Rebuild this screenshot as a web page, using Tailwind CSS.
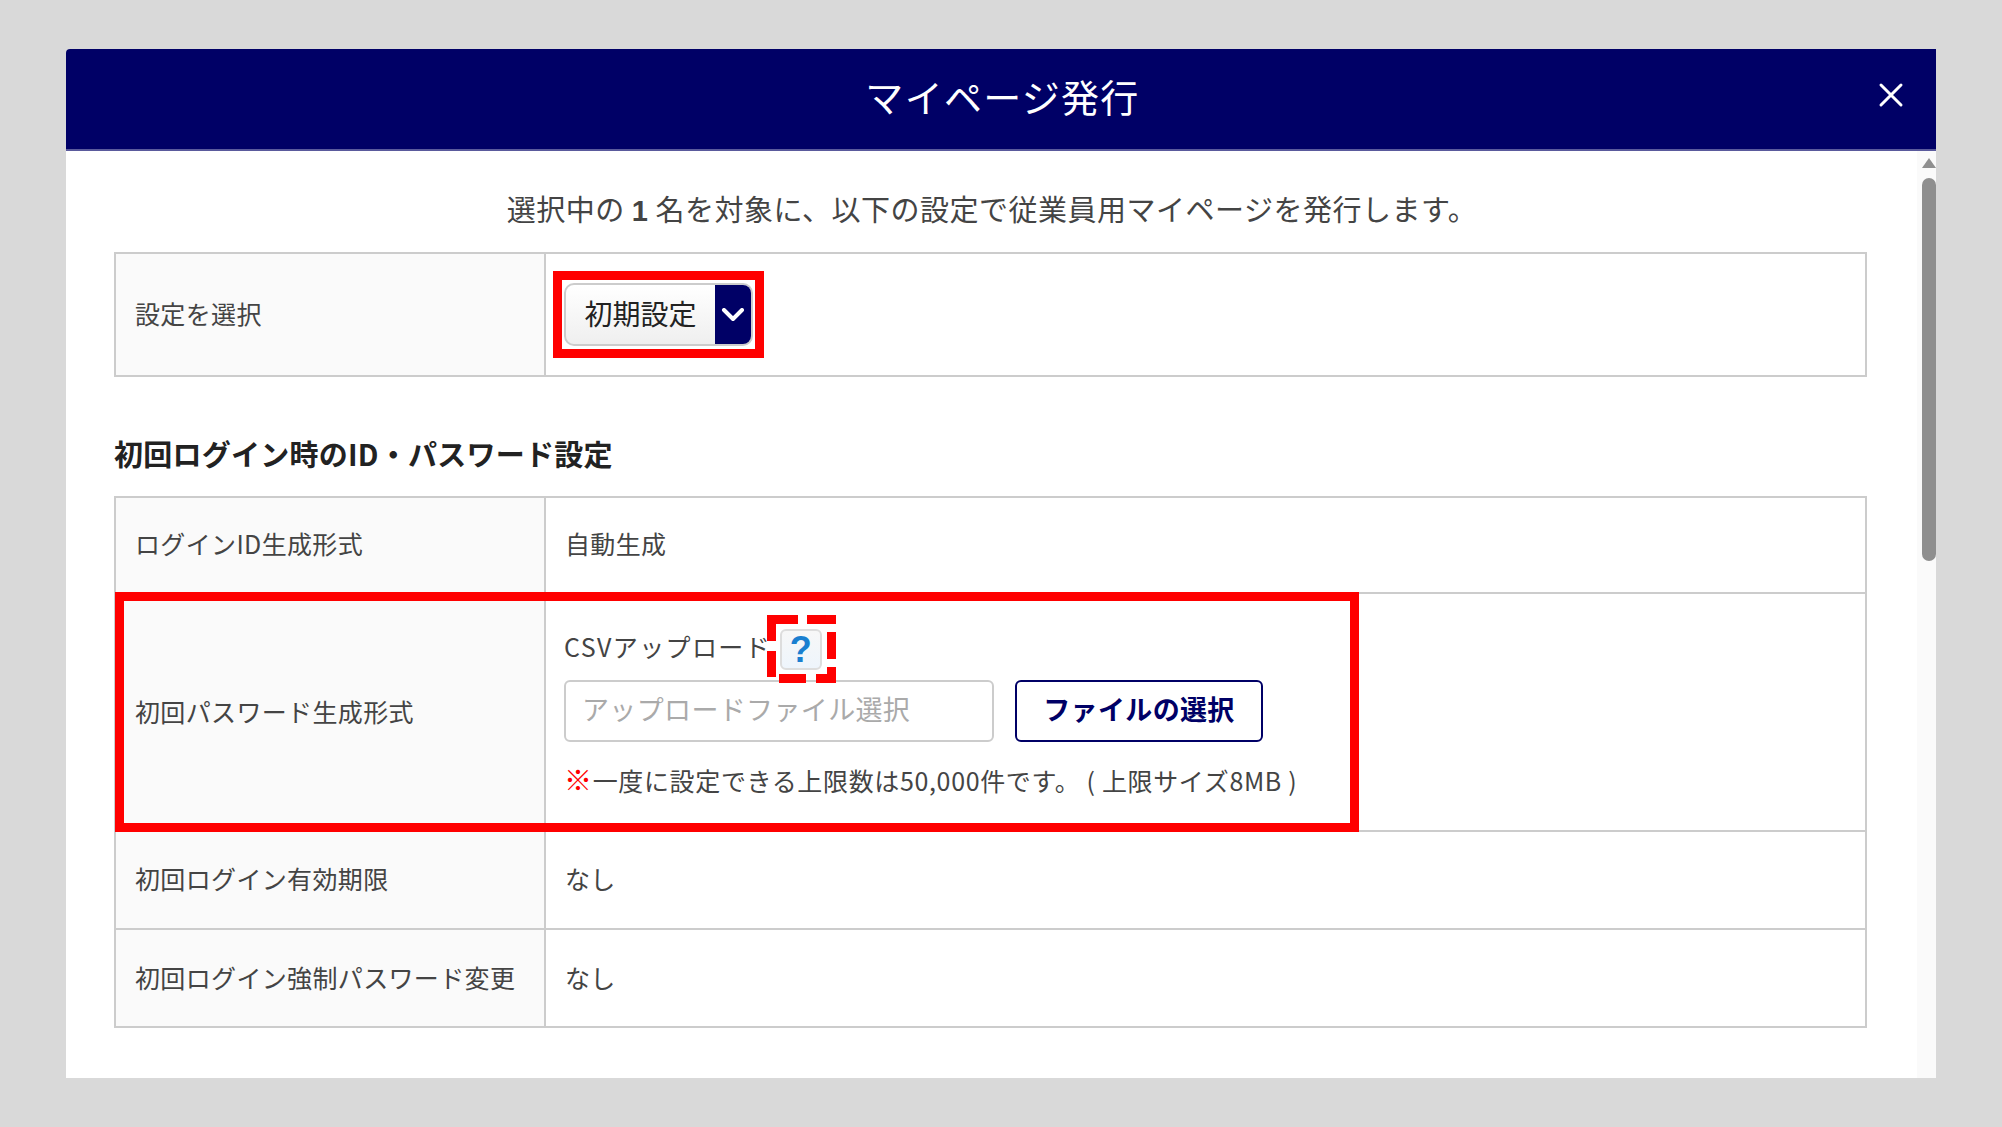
<!DOCTYPE html>
<html lang="ja">
<head>
<meta charset="utf-8">
<script src="https://cdn.jsdelivr.net/npm/@tailwindcss/browser@4"></script>
</head>
<body class="bg-[#d9d9d9] font-['Noto_Sans_CJK_JP','Noto_Sans',sans-serif] text-[#444444] overflow-hidden">
<div class="relative w-[2002px] h-[1127px] pt-[49px] pl-[66px]">
  <div class="relative w-[1870px] h-[1029px] bg-white flex flex-col overflow-hidden rounded-tl-[4px]">
    <header class="relative h-[102px] shrink-0 bg-[#000066] border-b-2 border-[#5a5a9c] flex items-center justify-center pl-[3px]">
      <h1 class="text-[38px] leading-none font-normal text-white tracking-[1.3px] -translate-y-[3px]">マイページ発行</h1>
      <svg class="absolute left-[1812px] top-[33px]" width="26" height="26" viewBox="0 0 26 26"><path d="M3 3 L23 23 M23 3 L3 23" stroke="#fff" stroke-width="3" stroke-linecap="round"/></svg>
    </header>
    <div class="relative flex-1 pl-[48px]">
      <p class="h-[101px] pt-[37px] pr-[66px] text-center text-[29px] leading-[40px] tracking-[0.5px]">選択中の <b class="font-['Liberation_Sans'] font-bold">1</b> 名を対象に、以下の設定で従業員用マイページを発行します。</p>
      <div class="w-[1753px] h-[125px] border-2 border-[#cccccc] flex">
        <div class="w-[430px] shrink-0 bg-[#fafafa] border-r-2 border-[#cccccc] flex items-center pl-[19px] pb-[2px] text-[25px] tracking-[0.35px]">設定を選択</div>
        <div class="flex-1 pl-[18px] pt-[29px]">
          <div class="w-[189px] h-[63px] rounded-[10px] border-2 border-[#cccccc] bg-gradient-to-b from-white to-[#efefef] flex overflow-hidden">
            <span class="w-[149px] text-center text-[28px] leading-[56px] text-[#222222]">初期設定</span>
            <span class="flex-1 bg-[#000066] flex items-center justify-center">
              <svg width="24" height="14" viewBox="0 0 24 14"><path d="M3 2 L12 11 L21 2" fill="none" stroke="#fff" stroke-width="4" stroke-linecap="round" stroke-linejoin="round"/></svg>
            </span>
          </div>
        </div>
      </div>
      <h2 class="h-[119px] pt-[56px] text-[29px] leading-[40px] font-bold text-[#222222] tracking-[0.25px]">初回ログイン時のID・パスワード設定</h2>
      <div class="w-[1753px] border-2 border-[#cccccc] text-[25px] tracking-[0.35px]">
        <div class="h-[96px] flex border-b-2 border-[#cccccc]">
          <div class="w-[430px] shrink-0 bg-[#fafafa] border-r-2 border-[#cccccc] flex items-center pl-[19px] pb-[2px]">ログインID生成形式</div>
          <div class="flex-1 flex items-center pl-[19px] pb-[2px]">自動生成</div>
        </div>
        <div class="h-[238px] flex border-b-2 border-[#cccccc]">
          <div class="w-[430px] shrink-0 bg-[#fafafa] border-r-2 border-[#cccccc] flex items-center pl-[19px]">初回パスワード生成形式</div>
          <div class="flex-1 pl-[18px] pt-[35px]">
            <div class="h-[41px] flex items-center">
              <span class="w-[216px] leading-[40px] pb-[8px] tracking-[1.4px] whitespace-nowrap">CSVアップロード</span>
              <span class="w-[42px] h-[41px] shrink-0 rounded-[6px] border-2 border-[#dddddd] bg-gradient-to-b from-[#f7f7f7] to-[#eef5fc] flex items-center justify-center text-[36px] leading-none font-bold text-[#1a7fd0] font-['Liberation_Sans']">?</span>
            </div>
            <div class="mt-[10px] flex gap-[21px]">
              <div class="w-[430px] h-[62px] rounded-[6px] border-2 border-[#cccccc] pl-[16px] text-[27px] leading-[54px] text-[#aaaaaa] tracking-[0.35px]">アップロードファイル選択</div>
              <div class="w-[248px] h-[62px] rounded-[6px] border-2 border-[#000066] text-center text-[27px] leading-[54px] font-bold text-[#000066]">ファイルの選択</div>
            </div>
            <p class="mt-[17px] leading-[40px] whitespace-nowrap tracking-[0.65px]"><span class="text-[#ff0000] font-bold text-[28px]">※</span>一度に設定できる上限数は50,000件です。 ( 上限サイズ8MB )</p>
          </div>
        </div>
        <div class="h-[98px] flex border-b-2 border-[#cccccc]">
          <div class="w-[430px] shrink-0 bg-[#fafafa] border-r-2 border-[#cccccc] flex items-center pl-[19px] pb-[2px]">初回ログイン有効期限</div>
          <div class="flex-1 flex items-center pl-[19px] pb-[2px]">なし</div>
        </div>
        <div class="h-[96px] flex">
          <div class="w-[430px] shrink-0 bg-[#fafafa] border-r-2 border-[#cccccc] flex items-center pl-[19px]">初回ログイン強制パスワード変更</div>
          <div class="flex-1 flex items-center pl-[19px]">なし</div>
        </div>
      </div>
      <div class="absolute top-0 right-0 bottom-0 w-[19px] bg-[#fafafa] overflow-hidden">
        <svg class="absolute left-[5px] top-[7px]" width="14" height="11" viewBox="0 0 14 11"><path d="M7 0 L14 10 H0 Z" fill="#8f8f8f"/></svg>
        <div class="absolute left-[5px] top-[27px] w-[14px] h-[383px] rounded-[7px] bg-[#8f8f8f]"></div>
      </div>
    </div>
  </div>
  <!-- annotation boxes -->
  <div class="absolute left-[553px] top-[271px] w-[211px] h-[87px] border-[9px] border-[#ff0000]"></div>
  <div class="absolute left-[115px] top-[592px] w-[1244px] h-[240px] border-[9px] border-[#ff0000]"></div>
  <svg class="absolute left-[767px] top-[615px]" width="69" height="68" viewBox="0 0 69 68">
    <g fill="#ff0000">
      <rect x="0" y="0" width="31" height="9"/><rect x="40" y="0" width="29" height="9"/>
      <rect x="60" y="17" width="9" height="27"/><rect x="60" y="52" width="9" height="16"/>
      <rect x="12" y="59" width="27" height="9"/><rect x="49" y="59" width="20" height="9"/>
      <rect x="0" y="0" width="9" height="26"/><rect x="0" y="36" width="9" height="26"/>
    </g>
  </svg>
</div>
</body>
</html>
